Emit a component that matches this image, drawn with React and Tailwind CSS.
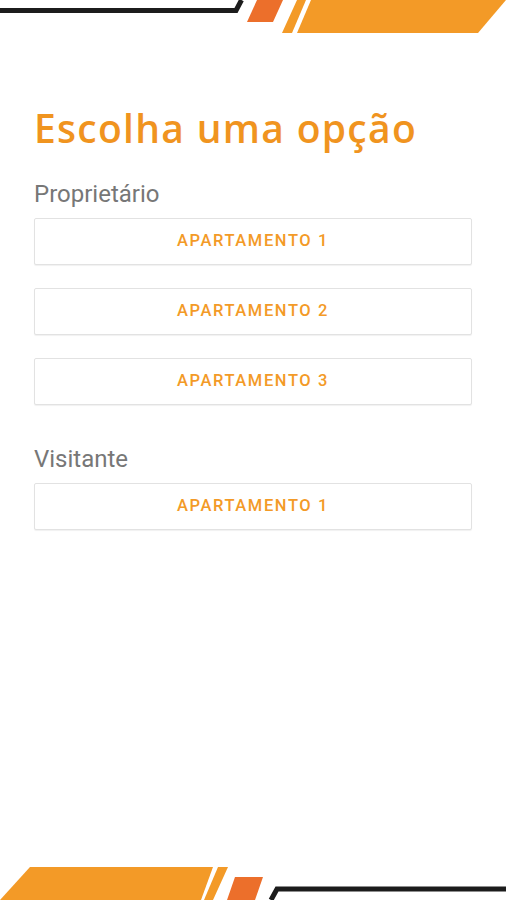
import React from 'react';

const ORANGE = '#f39a27';

// Top decoration: black frame corner + orange stripes
function TopStripes() {
  return (
    <svg className="block w-full h-[34px]" viewBox="0 0 506 34" preserveAspectRatio="none">
      <polyline points="0,10.5 236,10.5 241.5,0" fill="none" stroke="#1c1c1c" strokeWidth="5" strokeLinejoin="miter" />
      <polygon points="257,0 283,0 273,22 247,22" fill="#ec6f2b" />
      <polygon points="297,0 306,0 292,33 282,33" fill={ORANGE} />
      <polygon points="311,0 506,0 478,33 297,33" fill={ORANGE} />
    </svg>
  );
}

// Bottom decoration, mirrored layout
function BottomStripes() {
  return (
    <svg className="block w-full h-[34px]" viewBox="0 0 506 34" preserveAspectRatio="none">
      <polygon points="30,1 213,1 201,34 0,34" fill={ORANGE} />
      <polygon points="218,1 228,1 213,34 204,34" fill={ORANGE} />
      <polygon points="235,11 263,11 255,34 227,34" fill="#ec6f2b" />
      <polyline points="271,34 277,23 506,23" fill="none" stroke="#1c1c1c" strokeWidth="5" strokeLinejoin="miter" />
    </svg>
  );
}

function OptionButton({ label }) {
  return (
    <button
      type="button"
      className="w-full h-[47px] flex items-center justify-center bg-white border border-[#e2e2e2] rounded-[2px] shadow-[0_1px_1px_rgba(0,0,0,0.06)] text-[16.5px] font-medium tracking-[1.6px] text-[#f39a27] font-['Roboto',sans-serif]"
    >
      {label}
    </button>
  );
}

function Section({ title, items }) {
  return (
    <div>
      <p className="text-[24px] leading-[28px] text-[#777777] font-['Roboto',sans-serif]">{title}</p>
      <div className="mt-[10px] flex flex-col gap-[23px]">
        {items.map((item) => (
          <OptionButton key={item} label={item} />
        ))}
      </div>
    </div>
  );
}

export default function App() {
  return (
    <div className="min-h-screen h-[900px] flex flex-col bg-white">
      <TopStripes />
      <main className="flex-1 px-[34px]">
        <h1 className="mt-[72px] text-[39px] leading-[44px] font-semibold tracking-[1.3px] text-[#f0941f] font-['Open_Sans',sans-serif]">
          Escolha uma opção
        </h1>
        <div className="mt-[30px]">
          <Section title="Proprietário" items={['APARTAMENTO 1', 'APARTAMENTO 2', 'APARTAMENTO 3']} />
        </div>
        <div className="mt-[40px]">
          <Section title="Visitante" items={['APARTAMENTO 1']} />
        </div>
      </main>
      <BottomStripes />
    </div>
  );
}
